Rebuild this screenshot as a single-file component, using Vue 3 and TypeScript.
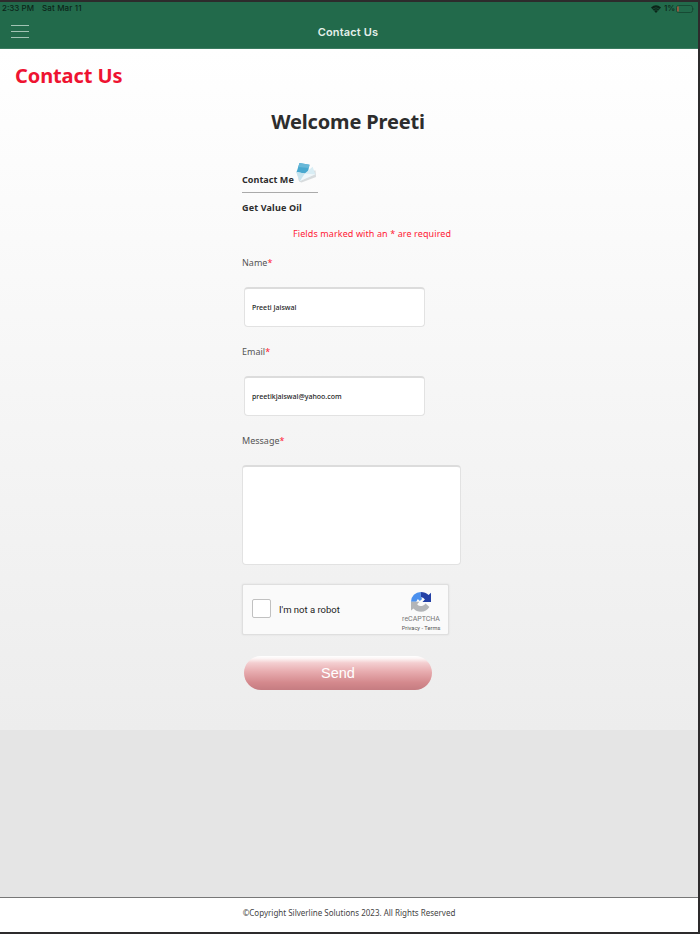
<script setup lang="ts">
import { ref } from 'vue'

const name = ref('Preeti Jaiswal')
const email = ref('preetikjaiswal@yahoo.com')
const message = ref('')
const isHuman = ref(false)

const toggleHuman = () => {
  isHuman.value = !isHuman.value
}
</script>

<template>
  <div class="screen">
    <header class="topbar">
      <div class="status">
        <span class="time">2:33 PM</span>
        <span class="date">Sat Mar 11</span>
        <svg class="wifi" width="10" height="8" viewBox="0 0 10 8">
          <path d="M0 2.6Q5-2 10 2.6L5 8Z" fill="#0b2519" />
          <path d="M1.6 4.1Q5 1.3 8.4 4.1M3 5.6Q5 4 7 5.6" fill="none" stroke="#226a4b" stroke-width=".5" />
        </svg>
        <span class="percent">1%</span>
        <svg class="battery" width="19" height="8" viewBox="0 0 19 8">
          <rect x=".5" y=".5" width="16" height="7" rx="2" fill="none" stroke="#174a34" />
          <rect x="1.2" y="1.5" width="1.5" height="5" fill="#b4573f" />
          <path d="M17.5 2.5q1.2 1.5 0 3z" fill="#174a34" />
        </svg>
      </div>
      <div class="nav">
        <button class="menu" type="button" aria-label="Menu">
          <i /><i /><i />
        </button>
        <span class="nav-title">Contact Us</span>
      </div>
    </header>

    <main class="content">
      <h1>Contact Us</h1>
      <h2>Welcome Preeti</h2>

      <form class="form" @submit.prevent>
        <div class="contact-me">
          <span>Contact Me</span>
          <svg width="22" height="21" viewBox="0 0 22 21">
            <path d="M2 10.5 20.5 8.5 21 15 6.5 20.5Q4 20 3.5 18Z" fill="#b9c1c4" opacity=".55" />
            <path d="M4.5 1 14.5 2.8 12.5 12 1.5 10.2Z" fill="#48a8cf" />
            <path d="M4.5 1 14.5 2.8 13.8 6 3.2 5Z" fill="#68b8d8" />
            <path d="M1.2 10 9.8 11.6 17.6 4.8 20.4 12.2 5 19Z" fill="#d9edf4" />
            <path d="M1.2 10 9.8 11.6 5 19Z" fill="#c5e3ee" />
            <path d="M5 19 10 11.8 20.4 12.2Z" fill="#f0f7fa" />
          </svg>
        </div>
        <div class="company">Get Value Oil</div>
        <p class="required-note"><span>Fields marked with an * are required</span></p>

        <label class="label" for="name">Name<b>*</b></label>
        <input id="name" v-model="name" class="field" type="text" />

        <label class="label" for="email">Email<b>*</b></label>
        <input id="email" v-model="email" class="field" type="text" />

        <label class="label" for="message">Message<b>*</b></label>
        <textarea id="message" v-model="message" class="message" />

        <div class="captcha">
          <button
            class="checkbox"
            type="button"
            role="checkbox"
            :aria-checked="isHuman"
            @click="toggleHuman"
          >
            <span v-if="isHuman">✓</span>
          </button>
          <span class="robot">I'm not a robot</span>
          <div class="brand">
            <svg width="22" height="22" viewBox="0 0 22 22">
              <path d="M1 10.8A9.8 9.8 0 0 1 10.8 1V6.2L12.2 8 9.8 10 7.8 8 6.2 10.8Z" fill="#4a90ee" />
              <path d="M10.8 1Q15.5 1 18.6 4L21 1.8V11H12.4L14.9 8.4Q13.4 6.2 10.8 6.2Z" fill="#2340a5" />
              <path d="M1 10.8H9.4L7.1 13.2Q9 15.6 12 15 14.5 14.5 15.6 12.6L19.4 16Q16.4 20.7 11 20.7 6.4 20.7 3.5 17.5L1 19.6Z" fill="#b3b5b8" />
            </svg>
            <span class="brand-name">reCAPTCHA</span>
            <span class="brand-links">Privacy - Terms</span>
          </div>
        </div>

        <button class="send" type="submit">Send</button>
      </form>
    </main>

    <div class="filler" />
    <footer class="footer">
      <span>©Copyright Silverline Solutions 2023. All Rights Reserved</span>
    </footer>
  </div>
</template>

<style>
body {
  margin: 0;
  background: #2b2a2a;
}
</style>

<style scoped>
.screen {
  width: 700px;
  height: 934px;
  border: solid #2d2b2c;
  border-width: 2px 2px 2px 0;
  display: flex;
  flex-direction: column;
  overflow: hidden;
  font-family: 'Noto Sans', 'Open Sans', sans-serif;
  color: #2d2d2d;
}

.screen *,
.screen {
  box-sizing: border-box;
}

.screen span {
  white-space: nowrap;
}

.topbar {
  height: 47px;
  flex: none;
  background: #226a4b;
  border-bottom: 1px solid #3b7b60;
}

.status {
  height: 13px;
  padding: 0 3px 0 2px;
  display: flex;
  align-items: center;
  font: 500 8px/13px Inter, sans-serif;
  color: #0b2519;
}

.time {
  width: 40px;
}

.date {
  flex: 1;
  letter-spacing: 0.15px;
}

.percent {
  margin: 0 1px 0 3px;
  width: 11px;
}

.nav {
  height: 33px;
  display: grid;
  grid-template-columns: 40px 1fr 42px;
  align-items: center;
}

.menu {
  margin: 0 0 0 11px;
  width: 18px;
  padding: 0;
  border: 0;
  background: none;
  display: flex;
  flex-direction: column;
  gap: 5px;
}

.menu i {
  width: 18px;
  height: 1px;
  background: #a2c3b4;
}

.nav-title {
  text-align: center;
  font: 600 11px/14px Inter, sans-serif;
  letter-spacing: 0.15px;
  color: #e4f0ea;
}

.content {
  height: 681px;
  flex: none;
  background: linear-gradient(#ffffff, #ededed);
}

h1,
h2 {
  margin: 0;
  font-size: 20px;
  line-height: 26px;
  font-weight: 700;
}

h1 {
  padding: 14px 0 0 15px;
  color: #ee1331;
  letter-spacing: -0.1px;
}

h2 {
  padding: 20px 2px 0 0;
  text-align: center;
  letter-spacing: -0.15px;
}

.form {
  width: 219px;
  margin: 26px 0 0 242px;
  display: flex;
  flex-direction: column;
  align-items: flex-start;
}

.contact-me {
  width: 76px;
  height: 32px;
  border-bottom: 1px solid #aaa;
  display: flex;
  align-items: flex-start;
  font-size: 9px;
  line-height: 12px;
  font-weight: 700;
}

.contact-me span {
  width: 53px;
  margin-top: 13px;
  flex: none;
  letter-spacing: 0.05px;
}

.contact-me svg {
  flex: none;
  margin-top: 1px;
}

.company {
  margin-top: 8px;
  font-size: 9px;
  line-height: 14px;
  font-weight: 700;
  letter-spacing: 0.15px;
}

.required-note {
  margin: 11px 0 0 51px;
  font-size: 9px;
  line-height: 16px;
  letter-spacing: 0.1px;
  color: #ff2035;
}

.label {
  height: 14px;
  margin-top: 14px;
  font-size: 9px;
  line-height: 14px;
  color: #555;
}

.label b {
  font-weight: 400;
  color: #ff2035;
}

.field {
  width: 181px;
  height: 40px;
  margin: 17px 0 4px 2px;
  padding: 0 7px 1px;
  border: 1px solid #e2e2e2;
  border-top: 2px solid #dcdcdc;
  border-radius: 4px;
  background: #fff;
  font: 500 7px 'Noto Sans', sans-serif;
  color: #222;
  outline: none;
}

.message {
  width: 219px;
  height: 100px;
  margin: 17px 0 0;
  border: 1px solid #e2e2e2;
  border-top: 2px solid #dcdcdc;
  border-radius: 4px;
  background: #fff;
  resize: none;
  outline: none;
}

.captcha {
  width: 207px;
  height: 51px;
  margin: 19px 0 0;
  padding-left: 9px;
  border: 1px solid #dfdfdf;
  border-radius: 2px;
  background: #fafafa;
  box-shadow: 0 0 2px rgba(0, 0, 0, 0.1);
  display: flex;
  align-items: center;
}

.checkbox {
  width: 19px;
  height: 19px;
  margin-top: -3px;
  padding: 0;
  border: 1px solid #c1c1c1;
  border-radius: 2px;
  background: #fff;
}

.robot {
  flex: 1;
  margin-left: 8px;
  font: 9.5px Roboto, sans-serif;
  color: #222;
}

.brand {
  width: 54px;
  padding-top: 3px;
  display: flex;
  flex-direction: column;
  align-items: center;
  font-family: Roboto, sans-serif;
  color: #777;
}

.brand-name {
  margin-top: 2px;
  font-size: 7px;
  line-height: 9px;
}

.brand-links {
  font-size: 5.7px;
  line-height: 8px;
  color: #555;
}

.send {
  width: 188px;
  height: 34px;
  margin: 21px 0 0 2px;
  padding: 0;
  border: 0;
  border-radius: 17px;
  background: linear-gradient(#fff 0, #fcf4f4 8%, #f4cfd1 20%, #e8adb0 45%, #d4898d 78%, #c57c81 100%);
  font: 14.5px 'Liberation Sans', sans-serif;
  color: #fff;
}

.filler {
  flex: 1;
  background: #e5e5e5;
}

.footer {
  height: 35px;
  flex: none;
  border-top: 1px solid #777;
  background: #fff;
  text-align: center;
  font-size: 8px;
  line-height: 30px;
  color: #444;
}
</style>
